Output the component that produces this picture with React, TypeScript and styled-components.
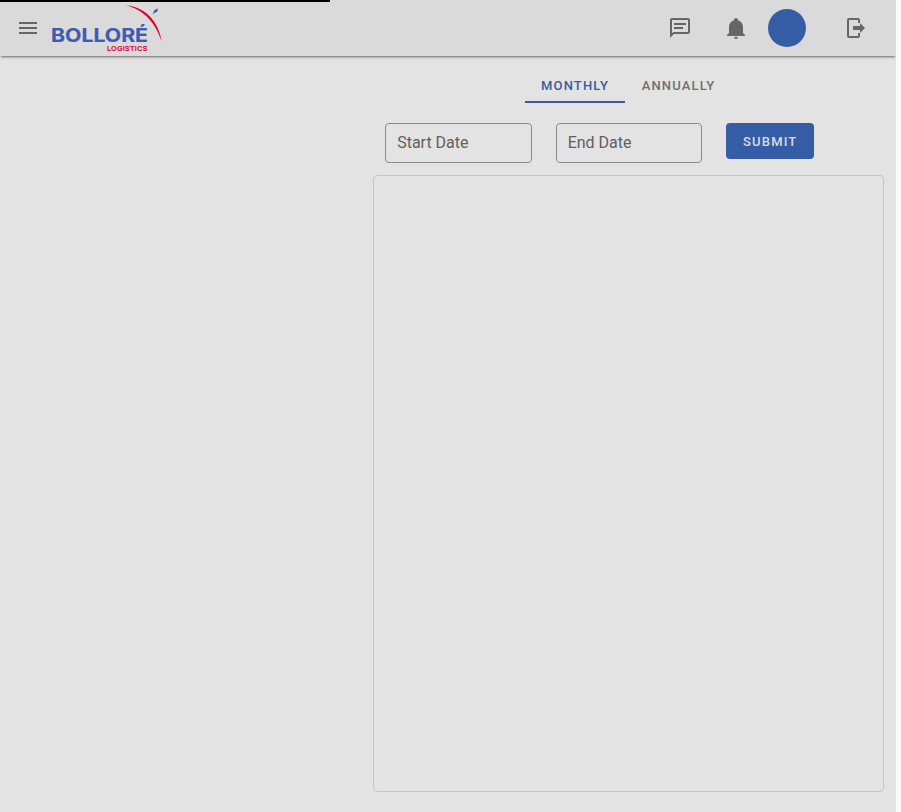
import React from "react";
import styled, { createGlobalStyle } from "styled-components";

const GlobalStyle = createGlobalStyle`
  *, *::before, *::after { box-sizing: border-box; }
  body { margin: 0; background: #fafafa; font-family: Roboto, sans-serif; overflow: hidden; }
`;

const Page = styled.div`
  position: relative;
  display: flex;
  flex-direction: column;
  width: 896px;
  height: 812px;
  background: #e3e3e3;
`;

const LoadingBar = styled.div`
  position: absolute;
  top: 0;
  left: 0;
  z-index: 3;
  width: 330px;
  height: 2px;
  background: #000;
`;

const Toolbar = styled.header`
  display: flex;
  flex: none;
  align-items: center;
  height: 56px;
  padding: 0 28px 0 16px;
  background: #dadada;
  box-shadow: 0 2px 2px -1px rgba(0, 0, 0, 0.5), 0 2px 4px rgba(0, 0, 0, 0.06);
  clip-path: inset(0 0 -8px 0);
`;

const IconButton = styled.button<{ $gap?: number }>`
  display: flex;
  flex: none;
  width: 24px;
  height: 24px;
  margin: 0 0 0 ${(p) => p.$gap ?? 0}px;
  padding: 0;
  border: 0;
  background: none;
  color: #666;
`;

const Icon = styled.svg`
  width: 24px;
  height: 24px;
  fill: currentColor;
`;

const Logo = styled.svg`
  flex: none;
  width: 120px;
  height: 56px;
  margin-left: 8px;
  font-family: Inter, sans-serif;
`;

const Spacer = styled.div`
  flex: 1;
`;

const Avatar = styled.div`
  flex: none;
  width: 38px;
  height: 38px;
  margin-left: 20px;
  border-radius: 50%;
  background: #355da5;
`;

const Content = styled.main`
  display: flex;
  flex: 1;
  flex-direction: column;
  width: 511px;
  margin: 12px 0 20px 373px;
`;

const Tabs = styled.nav`
  display: flex;
  gap: 0.7px;
  height: 35px;
  padding-left: 152px;
`;

const Tab = styled.button<{ $active?: boolean }>`
  min-width: 100px;
  padding: 2px 16px 0;
  border: 0;
  border-bottom: 2px solid ${(p) => (p.$active ? "#355da5" : "transparent")};
  background: none;
  color: ${(p) => (p.$active ? "#355da5" : "#6f6f6f")};
  font: 500 13px Roboto, sans-serif;
  letter-spacing: 1.16px;
  text-transform: uppercase;
`;

const Filters = styled.form`
  display: flex;
  gap: 24px;
  height: 40px;
  margin: 20px 0 12px 12px;
`;

const DateField = styled.label`
  width: 146.5px;
  height: 40px;
  padding: 0 11.15px;
  border: 1px solid #8b8b8b;
  border-radius: 4px;
  color: #5f5f5f;
  font-size: 16px;
  line-height: 37px;
`;

const SubmitButton = styled.button`
  width: 88px;
  height: 36px;
  padding: 0;
  border: 0;
  border-radius: 4px;
  background: #355da5;
  color: #d9dde5;
  font: 500 13px Roboto, sans-serif;
  letter-spacing: 1.16px;
  text-indent: 0.5px;
  text-transform: uppercase;
`;

const ChartPanel = styled.section`
  flex: 1;
  border: 1px solid #c6c6c6;
  border-radius: 4px;
`;

const paths = {
  menu: "M3 6H21V8H3V6M3 11H21V13H3V11M3 16H21V18H3V16Z",
  message:
    "M20 2H4C2.9 2 2 2.9 2 4V22L6 18H20C21.1 18 22 17.1 22 16V4C22 2.9 21.1 2 20 2M20 16H5.2L4 17.2V4H20V16M18 7H6V9H18V7M15 11H6V13H15V11Z",
  bell: "M21 19V20H3V19L5 17V11C5 7.9 7.03 5.17 10 4.29V4A2 2 0 0 1 14 4V4.29C16.97 5.17 19 7.9 19 11V17L21 19M14 21A2 2 0 0 1 10 21Z",
  logout:
    "M5 2H14A2 2 0 0 1 16 4V7H14V4H5V20H14V17H16V20A2 2 0 0 1 14 22H5A2 2 0 0 1 3 20V4A2 2 0 0 1 5 2M9 10H16V7L21 12L16 17V14H9Z",
};

const Glyph = ({ name }: { name: keyof typeof paths }) => (
  <Icon viewBox="0 0 24 24" aria-hidden="true">
    <path d={paths[name]} />
  </Icon>
);

export default function App() {
  return (
    <>
      <GlobalStyle />
      <Page>
        <LoadingBar />
        <Toolbar>
          <IconButton aria-label="Menu">
            <Glyph name="menu" />
          </IconButton>
          <Logo viewBox="48 0 120 56" role="img" aria-label="Bolloré Logistics">
            <text x="51" y="42" fill="#3f5ab5" stroke="#3f5ab5" strokeWidth=".2" fontSize="18.8" fontWeight="700" textLength="97" lengthAdjust="spacingAndGlyphs">BOLLORÉ</text>
            <path d="M152.6 14L154.8 9.8L157.8 8.4L157.4 11.4Z" fill="#3f5ab5" />
            <path d="M125 5C144.5 6.4 158.6 21 161.7 41.5C155.3 22.3 143 9 125 5Z" fill="#e3002b" />
            <text x="107" y="50.8" fill="#e3002b" fontSize="6.7" fontWeight="600" textLength="40.5" lengthAdjust="spacingAndGlyphs">LOGISTICS</text>
          </Logo>
          <Spacer />
          <IconButton aria-label="Messages">
            <Glyph name="message" />
          </IconButton>
          <IconButton aria-label="Notifications" $gap={32}>
            <Glyph name="bell" />
          </IconButton>
          <Avatar />
          <IconButton aria-label="Log out" $gap={38}>
            <Glyph name="logout" />
          </IconButton>
        </Toolbar>
        <Content>
          <Tabs>
            <Tab $active>Monthly</Tab>
            <Tab>Annually</Tab>
          </Tabs>
          <Filters>
            <DateField>Start Date</DateField>
            <DateField>End Date</DateField>
            <SubmitButton type="button">Submit</SubmitButton>
          </Filters>
          <ChartPanel />
        </Content>
      </Page>
    </>
  );
}
